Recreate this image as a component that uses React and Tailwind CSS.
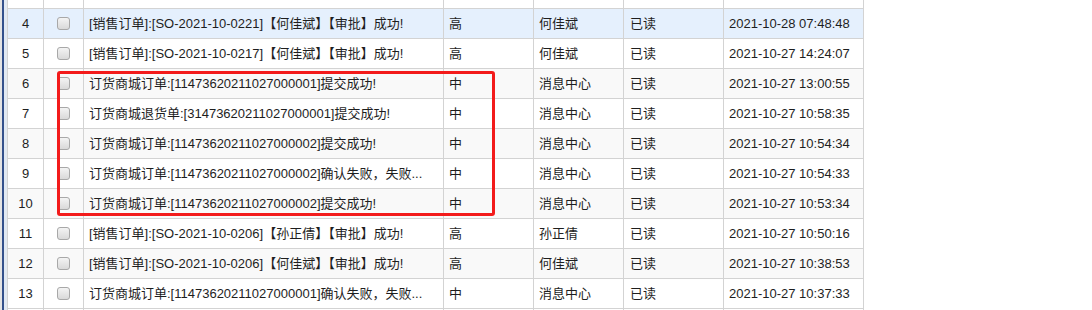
import React from 'react';

const rows = [
  { no: 4, msg: '[销售订单]:[SO-2021-10-0221]【何佳斌】【审批】成功!', level: '高', from: '何佳斌', read: '已读', time: '2021-10-28 07:48:48' },
  { no: 5, msg: '[销售订单]:[SO-2021-10-0217]【何佳斌】【审批】成功!', level: '高', from: '何佳斌', read: '已读', time: '2021-10-27 14:24:07' },
  { no: 6, msg: '订货商城订单:[11473620211027000001]提交成功!', level: '中', from: '消息中心', read: '已读', time: '2021-10-27 13:00:55' },
  { no: 7, msg: '订货商城退货单:[31473620211027000001]提交成功!', level: '中', from: '消息中心', read: '已读', time: '2021-10-27 10:58:35' },
  { no: 8, msg: '订货商城订单:[11473620211027000002]提交成功!', level: '中', from: '消息中心', read: '已读', time: '2021-10-27 10:54:34' },
  { no: 9, msg: '订货商城订单:[11473620211027000002]确认失败，失败...', level: '中', from: '消息中心', read: '已读', time: '2021-10-27 10:54:33' },
  { no: 10, msg: '订货商城订单:[11473620211027000002]提交成功!', level: '中', from: '消息中心', read: '已读', time: '2021-10-27 10:53:34' },
  { no: 11, msg: '[销售订单]:[SO-2021-10-0206]【孙正倩】【审批】成功!', level: '高', from: '孙正倩', read: '已读', time: '2021-10-27 10:50:16' },
  { no: 12, msg: '[销售订单]:[SO-2021-10-0206]【何佳斌】【审批】成功!', level: '高', from: '何佳斌', read: '已读', time: '2021-10-27 10:38:53' },
  { no: 13, msg: '订货商城订单:[11473620211027000001]确认失败，失败...', level: '中', from: '消息中心', read: '已读', time: '2021-10-27 10:37:33' },
];

const cols = 'grid grid-cols-[36px_40px_360px_90px_90px_100px_140px]';
const cell = 'border-r border-b border-[#d3d3d3] flex items-center min-w-0';

const Row = ({ r }) => {
  const bg = r.no === 4 ? 'bg-[#e5f0fd]' : r.no % 2 === 0 ? 'bg-[#f9f9f9]' : 'bg-white';
  return (
    <div className={`${cols} h-[30px] ${bg}`}>
      <div className={`${cell} justify-center`}>{r.no}</div>
      <div className={`${cell} justify-center`}>
        <span className="w-[13px] h-[13px] rounded-[3px] border border-[#a8a8a8] bg-linear-to-b from-[#f4f4f4] to-[#d9d9d9]" />
      </div>
      <div className={`${cell} px-[5px]`}>
        <span className="whitespace-nowrap">{r.msg}</span>
      </div>
      <div className={`${cell} px-[5px]`}>{r.level}</div>
      <div className={`${cell} px-[5px]`}>{r.from}</div>
      <div className={`${cell} px-[6px]`}>{r.read}</div>
      <div className={`${cell} px-[5px]`}>{r.time}</div>
    </div>
  );
};

const EmptyRow = ({ h }) => (
  <div className={`${cols} ${h}`}>
    {[0, 1, 2, 3, 4, 5, 6].map((i) => (
      <div key={i} className={cell} />
    ))}
  </div>
);

const App = () => {
  return (
    <div className="w-[1092px] h-[310px] overflow-hidden bg-white relative flex font-['Liberation_Sans','Noto_Sans_CJK_SC',sans-serif] text-[13px] text-[#1e1e1e]">
      {/* left frame strip */}
      <div className="w-[7px] shrink-0 flex">
        <div className="w-[2px] bg-[#e4e4e4]" />
        <div className="w-[2px] bg-[#34518c]" />
        <div className="w-[3px] bg-[#e2e9f2]" />
      </div>

      {/* grid */}
      <div className="border-l border-[#d3d3d3] self-start">
        <EmptyRow h="h-[9px]" />
        {rows.map((r) => (
          <Row key={r.no} r={r} />
        ))}
        <EmptyRow h="h-[30px]" />
      </div>

      {/* red annotation box */}
      <div className="absolute left-[57px] top-[71px] w-[438px] h-[145px] border-[3px] border-[#f31b1b] rounded-[3px] pointer-events-none" />
    </div>
  );
};

export default App;
